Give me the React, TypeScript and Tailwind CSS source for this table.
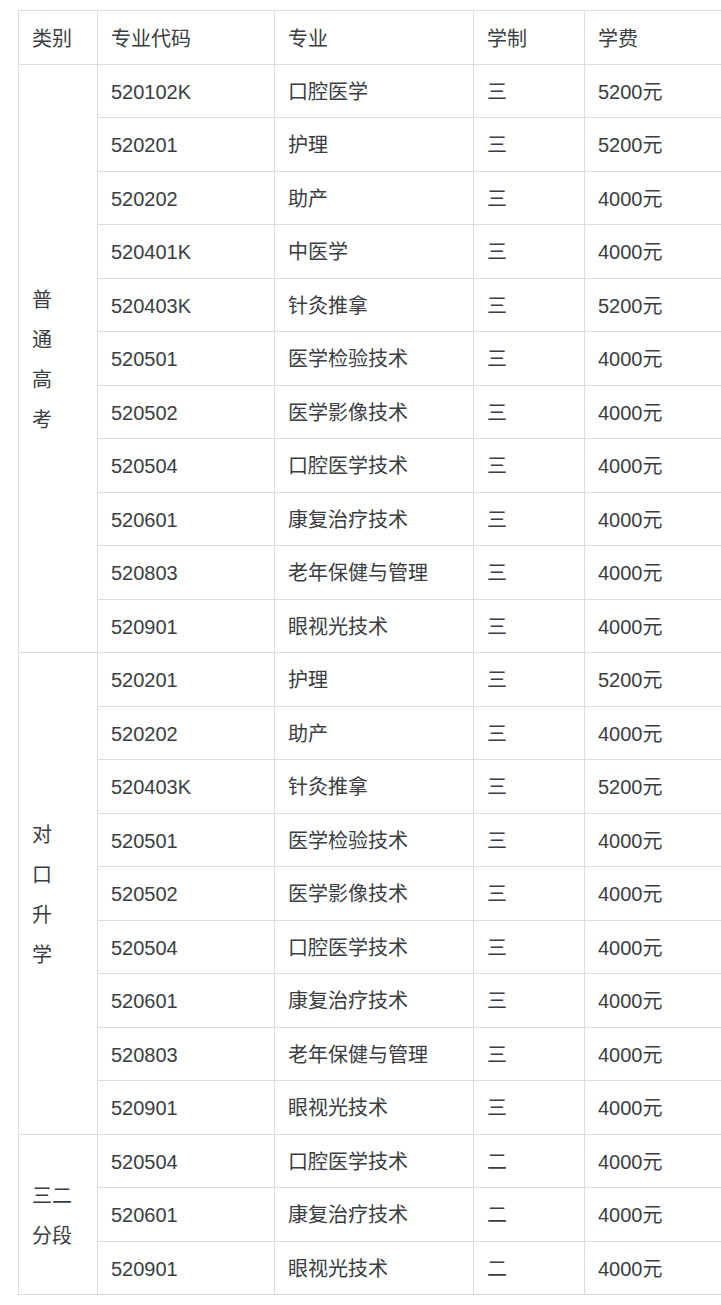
type Row = { code: string; name: string; years: string; fee: string };

const groups: { label: React.ReactNode; rows: Row[] }[] = [
  {
    label: (
      <>
        普<br />通<br />高<br />考
      </>
    ),
    rows: [
      { code: '520102K', name: '口腔医学', years: '三', fee: '5200元' },
      { code: '520201', name: '护理', years: '三', fee: '5200元' },
      { code: '520202', name: '助产', years: '三', fee: '4000元' },
      { code: '520401K', name: '中医学', years: '三', fee: '4000元' },
      { code: '520403K', name: '针灸推拿', years: '三', fee: '5200元' },
      { code: '520501', name: '医学检验技术', years: '三', fee: '4000元' },
      { code: '520502', name: '医学影像技术', years: '三', fee: '4000元' },
      { code: '520504', name: '口腔医学技术', years: '三', fee: '4000元' },
      { code: '520601', name: '康复治疗技术', years: '三', fee: '4000元' },
      { code: '520803', name: '老年保健与管理', years: '三', fee: '4000元' },
      { code: '520901', name: '眼视光技术', years: '三', fee: '4000元' },
    ],
  },
  {
    label: (
      <>
        对<br />口<br />升<br />学
      </>
    ),
    rows: [
      { code: '520201', name: '护理', years: '三', fee: '5200元' },
      { code: '520202', name: '助产', years: '三', fee: '4000元' },
      { code: '520403K', name: '针灸推拿', years: '三', fee: '5200元' },
      { code: '520501', name: '医学检验技术', years: '三', fee: '4000元' },
      { code: '520502', name: '医学影像技术', years: '三', fee: '4000元' },
      { code: '520504', name: '口腔医学技术', years: '三', fee: '4000元' },
      { code: '520601', name: '康复治疗技术', years: '三', fee: '4000元' },
      { code: '520803', name: '老年保健与管理', years: '三', fee: '4000元' },
      { code: '520901', name: '眼视光技术', years: '三', fee: '4000元' },
    ],
  },
  {
    label: '三二分段',
    rows: [
      { code: '520504', name: '口腔医学技术', years: '二', fee: '4000元' },
      { code: '520601', name: '康复治疗技术', years: '二', fee: '4000元' },
      { code: '520901', name: '眼视光技术', years: '二', fee: '4000元' },
    ],
  },
];

const cell = 'border border-[#dddddd] px-[13px] pb-0 h-[53.5px] align-middle text-left font-normal';

export default function App() {
  return (
    <div
      className="w-[721px] overflow-x-hidden bg-white pt-[10px] pl-[18px] text-[20px] leading-[30px] text-[#3a3d42]"
      style={{ fontFamily: '"Liberation Sans", "Noto Sans CJK SC", sans-serif' }}
    >
      <table className="w-[780px] table-fixed border-collapse">
        <colgroup>
          <col className="w-[79px]" />
          <col className="w-[177px]" />
          <col className="w-[199px]" />
          <col className="w-[111px]" />
          <col className="w-[214px]" />
        </colgroup>
        <thead>
          <tr>
            <th className={`${cell} pt-[3px]`}>类别</th>
            <th className={`${cell} pt-[3px]`}>专业代码</th>
            <th className={`${cell} pt-[3px]`}>专业</th>
            <th className={`${cell} pt-[3px]`}>学制</th>
            <th className={`${cell} pt-[3px]`}>学费</th>
          </tr>
        </thead>
        <tbody>
          {groups.map((g, gi) =>
            g.rows.map((r, i) => (
              <tr key={`${gi}-${i}`}>
                {i === 0 && (
                  <td rowSpan={g.rows.length} className={`${cell} pt-[4px] leading-[40px]`}>
                    {g.label}
                  </td>
                )}
                <td className={`${cell} pt-[2px]`}>{r.code}</td>
                <td className={`${cell} pt-[2px]`}>{r.name}</td>
                <td className={`${cell} pt-[2px]`}>{r.years}</td>
                <td className={`${cell} pt-[2px]`}>{r.fee}</td>
              </tr>
            ))
          )}
        </tbody>
      </table>
    </div>
  );
}
